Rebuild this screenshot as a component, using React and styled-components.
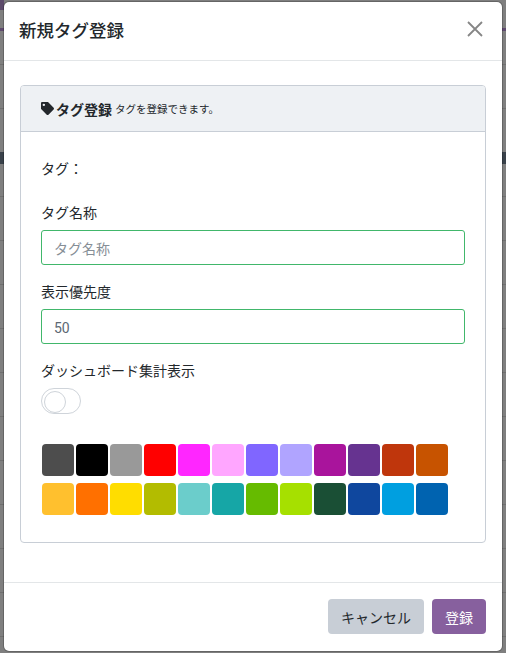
import React from 'react';
import styled, {createGlobalStyle} from 'styled-components';

const GlobalStyle = createGlobalStyle`
  html, body {
    margin: 0;
    padding: 0;
    height: 653px;
    overflow: hidden;
    background: #7f7f7f;
  }

  body {
    font-family: Roboto, "Noto Sans CJK JP", "Liberation Sans", sans-serif;
    font-size: 14px;
    color: #23282c;
  }

  * {
    box-sizing: border-box;
  }
`;

const Backdrop = styled.div`
  width: 506px;
  height: 653px;
  padding: 1px 3px;
  background-image:
    linear-gradient(#5d4b6b, #5d4b6b),
    linear-gradient(#5f4a6e, #5f4a6e),
    linear-gradient(#39414a, #39414a),
    repeating-linear-gradient(#7f7f7f 0 43px, #6f6f6f 43px 44px);
  background-size: 4px 10px, 100% 3px, 100% 12px, 100% 100%;
  background-position: 0 0, 0 28px, 0 152px, 0 21px;
  background-repeat: no-repeat, no-repeat, no-repeat, repeat;
`;

const Modal = styled.div`
  width: 500px;
  height: 651px;
  display: flex;
  flex-direction: column;
  background: #fff;
  background-clip: padding-box;
  border: 1px solid rgba(0, 0, 0, 0.2);
  border-radius: 6px;
`;

const ModalHeader = styled.header`
  height: 59px;
  flex-shrink: 0;
  display: flex;
  align-items: center;
  justify-content: space-between;
  padding: 0 15px 3px 15px;
  border-bottom: 1px solid #e3e6e8;
`;

const ModalTitle = styled.h5`
  margin: 0;
  font-size: 17.5px;
  font-weight: 500;
`;

const CloseButton = styled.button`
  width: 24px;
  height: 24px;
  margin-bottom: 2px;
  padding: 3px;
  border: 0;
  background: none;
  color: #868686;
  display: flex;
`;

const ModalBody = styled.div`
  flex: 1;
  padding: 24px 16px 39px;
`;

const Card = styled.section`
  height: 458px;
  border: 1px solid #c8ced6;
  border-radius: 4px;
  overflow: hidden;
`;

const CardHeader = styled.div`
  height: 46px;
  display: flex;
  align-items: center;
  padding: 0 20px;
  background: #eef1f4;
  border-bottom: 1px solid #c8ced6;
`;

const CardTitle = styled.strong`
  display: flex;
  align-items: center;
  gap: 2px;
  font-size: 14px;
  font-weight: 700;
`;

const CardNote = styled.small`
  margin-left: 3px;
  font-size: 10.5px;
  font-weight: 400;
`;

const CardBody = styled.div`
  padding: 27px 20px 0;
`;

const TagLine = styled.div`
  height: 20px;
  line-height: 20px;
  margin-bottom: 24px;
`;

const Field = styled.div`
  margin-bottom: 17px;
`;

const Label = styled.label`
  display: block;
  height: 20px;
  line-height: 20px;
  margin-bottom: 7px;
`;

const Input = styled.input`
  display: block;
  width: 424px;
  height: 35px;
  padding: 2px 12px 0;
  border: 1px solid #41b76b;
  border-radius: 3px;
  font: inherit;
  color: #5c6873;
  outline: 0;

  &::placeholder {
    color: #868e96;
  }
`;

const Toggle = styled.span`
  display: block;
  width: 40px;
  height: 26px;
  border: 1px solid #cfd4da;
  border-radius: 13px;
  position: relative;

  &::before {
    content: '';
    position: absolute;
    top: 2px;
    left: 2px;
    width: 20px;
    height: 20px;
    border: 1px solid #cfd4da;
    border-radius: 50%;
  }
`;

const Palette = styled.div`
  display: grid;
  grid-template-columns: repeat(12, 32px);
  gap: 7px 2px;
  margin: 30px 0 0 1px;
`;

const Swatch = styled.button`
  width: 32px;
  height: 32px;
  padding: 0;
  border: 0;
  border-radius: 4px;
  background: ${(props) => props.$color};
`;

const ModalFooter = styled.footer`
  height: 70px;
  flex-shrink: 0;
  display: flex;
  align-items: flex-start;
  justify-content: flex-end;
  gap: 8px;
  padding: 16px 16px 0;
  border-top: 1px solid #e3e6e8;
`;

const Button = styled.button`
  height: 35px;
  padding: 0 13px;
  border: 0;
  border-radius: 4px;
  font: inherit;
  background: ${(props) => (props.$primary ? '#87609e' : '#c8ced6')};
  color: ${(props) => (props.$primary ? '#fff' : '#23282c')};
`;

const colors = [
  '#4d4d4d', '#000000', '#999999', '#ff0000', '#ff26ff', '#ffa6ff', '#8066ff', '#b0a4ff', '#a9149c', '#663390', '#bf360c', '#c75300',
  '#ffc02e', '#ff7000', '#ffdd00', '#b3bc00', '#6bcdcb', '#16a6a6', '#66bb00', '#a6e000', '#1a4f35', '#0f479e', '#009fe0', '#0063b0'
];

function TagIcon() {
  return (
    <svg width="13" height="13" viewBox="0 0 512 512" fill="currentColor">
      <path d="M0 252V48C0 21.5 21.5 0 48 0h204c12.700 0 24.900 5.100 33.900 14.100l211.900 211.900c18.700 18.700 18.700 49.100 0 67.900L293.900 497.900c-18.700 18.700-49.100 18.700-67.900 0L14.100 286C5.100 277 0 264.700 0 252zm112-188a48 48 0 1 0 0 96 48 48 0 1 0 0-96z" />
    </svg>
  );
}

function CloseIcon() {
  return (
    <svg width="18" height="18" viewBox="0 0 18 18" fill="none" stroke="currentColor" strokeWidth="1.8">
      <path d="M2 2l14 14M16 2L2 16" />
    </svg>
  );
}

export default function App() {
  return (
    <Backdrop>
      <GlobalStyle />
      <Modal>
        <ModalHeader>
          <ModalTitle>新規タグ登録</ModalTitle>
          <CloseButton>
            <CloseIcon />
          </CloseButton>
        </ModalHeader>
        <ModalBody>
          <Card>
            <CardHeader>
              <CardTitle>
                <TagIcon />
                タグ登録
              </CardTitle>
              <CardNote>タグを登録できます。</CardNote>
            </CardHeader>
            <CardBody>
              <TagLine>タグ：</TagLine>
              <Field>
                <Label>タグ名称</Label>
                <Input placeholder="タグ名称" />
              </Field>
              <Field>
                <Label>表示優先度</Label>
                <Input defaultValue="50" />
              </Field>
              <Label>ダッシュボード集計表示</Label>
              <Toggle />
              <Palette>
                {colors.map((color) => (
                  <Swatch $color={color} key={color} />
                ))}
              </Palette>
            </CardBody>
          </Card>
        </ModalBody>
        <ModalFooter>
          <Button>キャンセル</Button>
          <Button $primary>登録</Button>
        </ModalFooter>
      </Modal>
    </Backdrop>
  );
}
